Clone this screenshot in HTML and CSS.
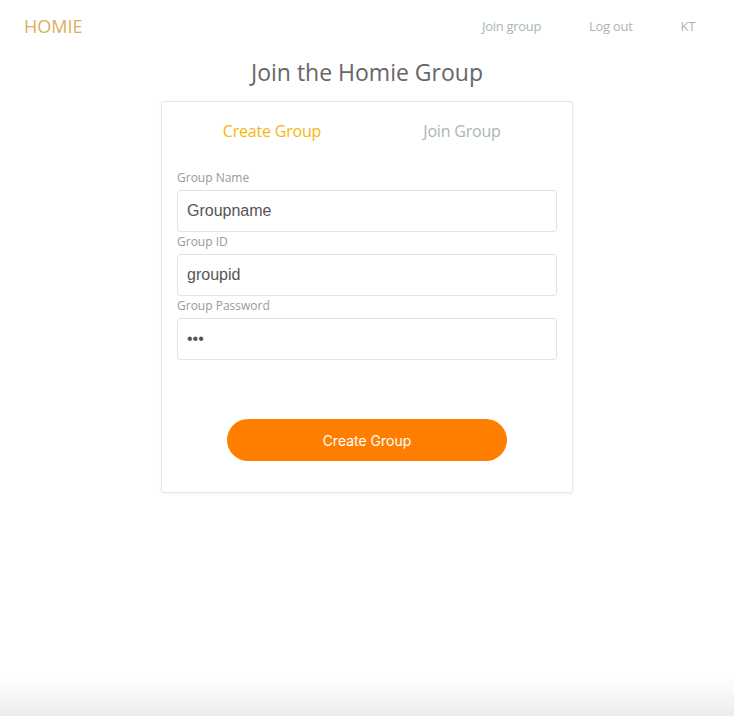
FILE: index.html
```html
<!DOCTYPE html>
<html lang="en">
<head>
<meta charset="utf-8">
<title>Homie</title>
<link rel="stylesheet" href="styles.css">
</head>
<body>
<div class="page">
  <header class="topbar">
    <div class="brand">HOMIE</div>
    <nav class="nav">
      <a class="nav-link">Join group</a>
      <a class="nav-link">Log out</a>
      <a class="nav-link">KT</a>
    </nav>
  </header>
  <main class="main">
    <h1 class="title">Join the Homie Group</h1>
    <section class="card">
      <div class="tabs">
        <div class="tab tab-active">Create Group</div>
        <div class="tab">Join Group</div>
      </div>
      <form class="form">
        <label class="label">Group Name</label>
        <input class="input" type="text" value="Groupname">
        <label class="label">Group ID</label>
        <input class="input" type="text" value="groupid">
        <label class="label">Group Password</label>
        <input class="input" type="password" value="abc">
        <div class="actions">
          <button class="btn" type="button">Create Group</button>
        </div>
      </form>
    </section>
  </main>
  <div class="fade"></div>
</div>
</body>
</html>
```

FILE: styles.css
```css
* { box-sizing: border-box; }
html, body { margin: 0; padding: 0; }
body {
  background: #fff;
  font-family: "Open Sans", "Noto Sans", sans-serif;
  width: 734px;
  height: 716px;
  overflow: hidden;
}
.page {
  position: relative;
  height: 716px;
}
.topbar {
  display: flex;
  align-items: center;
  justify-content: space-between;
  height: 52px;
  padding: 0 39px 0 24px;
}
.brand {
  color: #dfad5e;
  font-size: 18px;
  letter-spacing: 0;
}
.nav {
  display: flex;
  gap: 48px;
}
.nav-link {
  color: #aab5b7;
  font-size: 13px;
  letter-spacing: -0.3px;
}
.main {
  display: flex;
  flex-direction: column;
  align-items: center;
}
.title {
  margin: 4px 0 13px;
  font-size: 23px;
  font-weight: 400;
  color: #666;
  line-height: 32px;
}
.card {
  width: 412px;
  border: 1px solid #e6e6e6;
  border-radius: 3px;
  box-shadow: 0 1px 3px rgba(0,0,0,0.06);
  padding: 0 15px 31px;
}
.tabs {
  display: flex;
  height: 57px;
  align-items: center;
}
.tab {
  flex: 1;
  text-align: center;
  font-size: 16px;
  color: #aab5b7;
  letter-spacing: -0.2px;
}
.tab-active { color: #f7b50f; }
.form {
  display: flex;
  flex-direction: column;
  padding-top: 11px;
}
.label {
  font-size: 12px;
  color: #999;
  line-height: 16px;
  margin-bottom: 4px;
}
.input {
  height: 42px;
  width: 380px;
  border: 1px solid #e3e3e3;
  border-radius: 3px;
  padding: 0 9px;
  font-family: "Liberation Sans", Arial, sans-serif;
  font-size: 16px;
  color: #555;
  margin: 0 0 2px;
  outline: none;
}
.actions {
  display: flex;
  justify-content: center;
  padding-top: 57px;
}
.btn {
  width: 280px;
  height: 42px;
  border: none;
  border-radius: 21px;
  background: #ff7e00;
  color: #fff;
  font-family: Inter, "Liberation Sans", sans-serif;
  font-size: 14px;
}
.fade {
  position: absolute;
  left: 0;
  right: 0;
  bottom: 0;
  height: 40px;
  background: linear-gradient(to bottom, rgba(238,238,238,0), #ededed);
}
```
